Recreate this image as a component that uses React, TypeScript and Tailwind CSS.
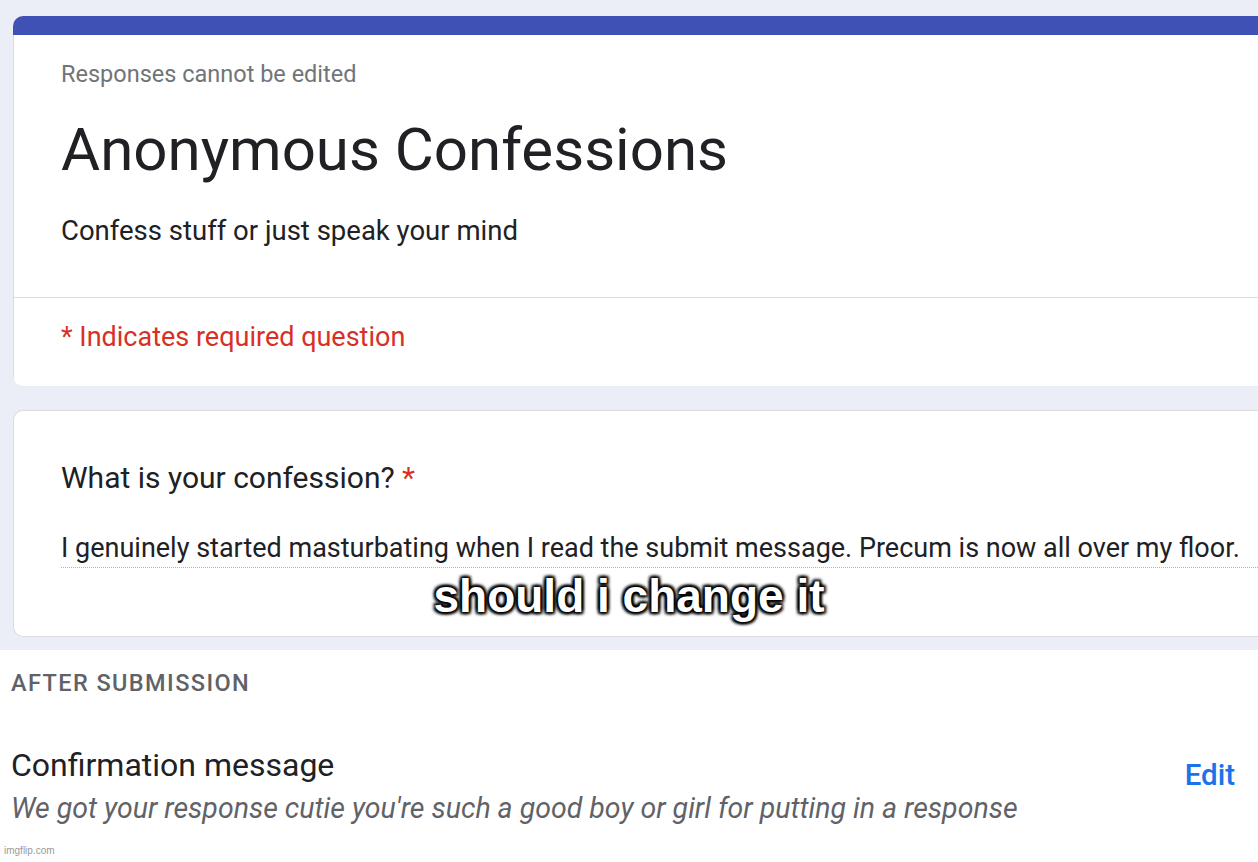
export default function App() {
  return (
    <div
      className="relative h-[862px] w-[1258px] overflow-hidden bg-white"
      style={{ fontFamily: "Roboto, 'Liberation Sans', sans-serif" }}
    >
      <div className="h-[650px] bg-[#ebedf7] pl-[13px] pt-[16px]">
        {/* header card */}
        <div className="overflow-hidden rounded-l-[10px] bg-white">
          <div className="h-[19px] bg-[#3f51b5]" />
          <div className="border-l border-[#dadce0]">
            <div className="px-[47px] pb-[49px] pt-[24px]">
              <p className="text-[23.5px] leading-[30px] text-[#70757a]">Responses cannot be edited</p>
              <h1 className="mt-[26px] text-[60px] leading-[70px] text-[#202124]">Anonymous Confessions</h1>
              <p className="mt-[29px] text-[27.5px] leading-[34px] text-[#202124]">Confess stuff or just speak your mind</p>
            </div>
            <div className="border-t border-[#dadce0] px-[47px] pb-[32px] pt-[22px]">
              <p className="text-[27px] leading-[34px] text-[#d93025]">* Indicates required question</p>
            </div>
          </div>
        </div>

        {/* question card */}
        <div className="mt-[24px] rounded-l-[10px] border border-r-0 border-[#dadce0] bg-white pb-[68px] pl-[47px] pt-[48px]">
          <p className="text-[30px] leading-[38px] text-[#202124]">
            What is your confession? <span className="text-[#d93025]">*</span>
          </p>
          <div className="mt-[34px] border-b border-dotted border-[#b0b4b8] pb-[2px]">
            <p className="whitespace-nowrap text-[27px] leading-[34px] text-[#202124]">
              I genuinely started masturbating when I read the submit message. Precum is now all over my floor.
            </p>
          </div>
        </div>
      </div>

      {/* meme caption */}
      <div
        className="absolute left-0 right-0 top-[570px] text-center text-[46px] font-bold leading-[52px] text-white"
        style={{
          fontFamily: "'Liberation Sans', Arial, sans-serif",
          textShadow:
            "2px 2px 3px #000, -2px -2px 3px #000, 2px -2px 3px #000, -2px 2px 3px #000, 0 0 4px #000",
        }}
      >
        should i change it
      </div>

      {/* after submission */}
      <div className="px-[11px] pt-[18px]">
        <p className="text-[23.5px] font-medium uppercase leading-[30px] tracking-[0.06em] text-[#5f6368]">After submission</p>
        <div className="mt-[48px] flex items-start justify-between pr-[12px]">
          <div>
            <p className="text-[32px] leading-[38px] text-[#202124]">Confirmation message</p>
            <p className="mt-[8px] text-[28.5px] italic leading-[34px] text-[#5f6368]">
              We got your response cutie you're such a good boy or girl for putting in a response
            </p>
          </div>
          <span className="mt-[12px] text-[29.5px] font-medium leading-[34px] text-[#1a73e8]">Edit</span>
        </div>
      </div>

      <span
        className="absolute bottom-[4px] left-[4px] text-[10px] text-[#9a9a9a]"
        style={{ fontFamily: "'Liberation Sans', Arial, sans-serif" }}
      >
        imgflip.com
      </span>
    </div>
  );
}
